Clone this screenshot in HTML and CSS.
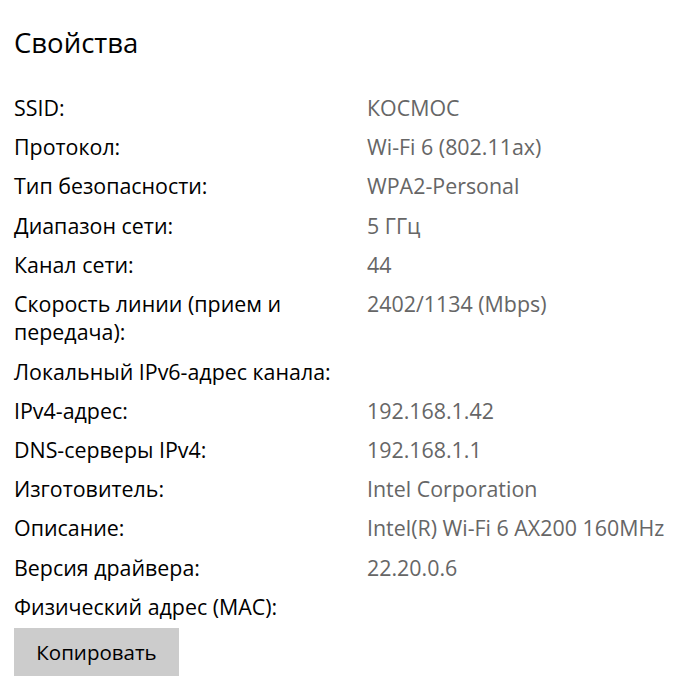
FILE: index.html
```html
<!DOCTYPE html>
<html lang="ru">
<head>
<meta charset="utf-8">
<link rel="stylesheet" href="styles.css">
</head>
<body>
<main class="page">
  <h1 class="title">Свойства</h1>
  <dl class="props">
    <dt>SSID:</dt><dd>КОСМОС</dd>
    <dt>Протокол:</dt><dd>Wi-Fi 6 (802.11ax)</dd>
    <dt>Тип безопасности:</dt><dd>WPA2-Personal</dd>
    <dt>Диапазон сети:</dt><dd>5 ГГц</dd>
    <dt>Канал сети:</dt><dd>44</dd>
    <dt>Скорость линии (прием и передача):</dt><dd>2402/1134 (Mbps)</dd>
    <dt>Локальный IPv6-адрес канала:</dt><dd></dd>
    <dt>IPv4-адрес:</dt><dd>192.168.1.42</dd>
    <dt>DNS-серверы IPv4:</dt><dd>192.168.1.1</dd>
    <dt>Изготовитель:</dt><dd>Intel Corporation</dd>
    <dt>Описание:</dt><dd>Intel(R) Wi-Fi 6 AX200 160MHz</dd>
    <dt>Версия драйвера:</dt><dd>22.20.0.6</dd>
    <dt>Физический адрес (MAC):</dt><dd></dd>
  </dl>
  <button class="copy" type="button">Копировать</button>
</main>
</body>
</html>
```
FILE: styles.css
```css
html, body {
  margin: 0;
  background: #ffffff;
}
body {
  font-family: "Open Sans", "Noto Sans", sans-serif;
  color: #000000;
}
.page {
  padding: 25px 0 0 14px;
  display: flex;
  flex-direction: column;
  align-items: flex-start;
}
.title {
  margin: 0;
  font-size: 27.5px;
  font-weight: 400;
  line-height: 36px;
}
.props {
  margin: 33px 0 0 0;
  display: grid;
  grid-template-columns: 353px 329px;
  row-gap: 10.7px;
  font-size: 21.4px;
  line-height: 28.5px;
}
.props dt {
  margin: 0;
  width: 346px;
}
.props dd {
  margin: 0;
  color: #666666;
  white-space: nowrap;
}
.copy {
  margin-top: 7px;
  width: 165px;
  height: 48px;
  border: none;
  background: #cccccc;
  font-family: inherit;
  font-size: 20.5px;
  color: #000000;
  padding: 0;
}
```
